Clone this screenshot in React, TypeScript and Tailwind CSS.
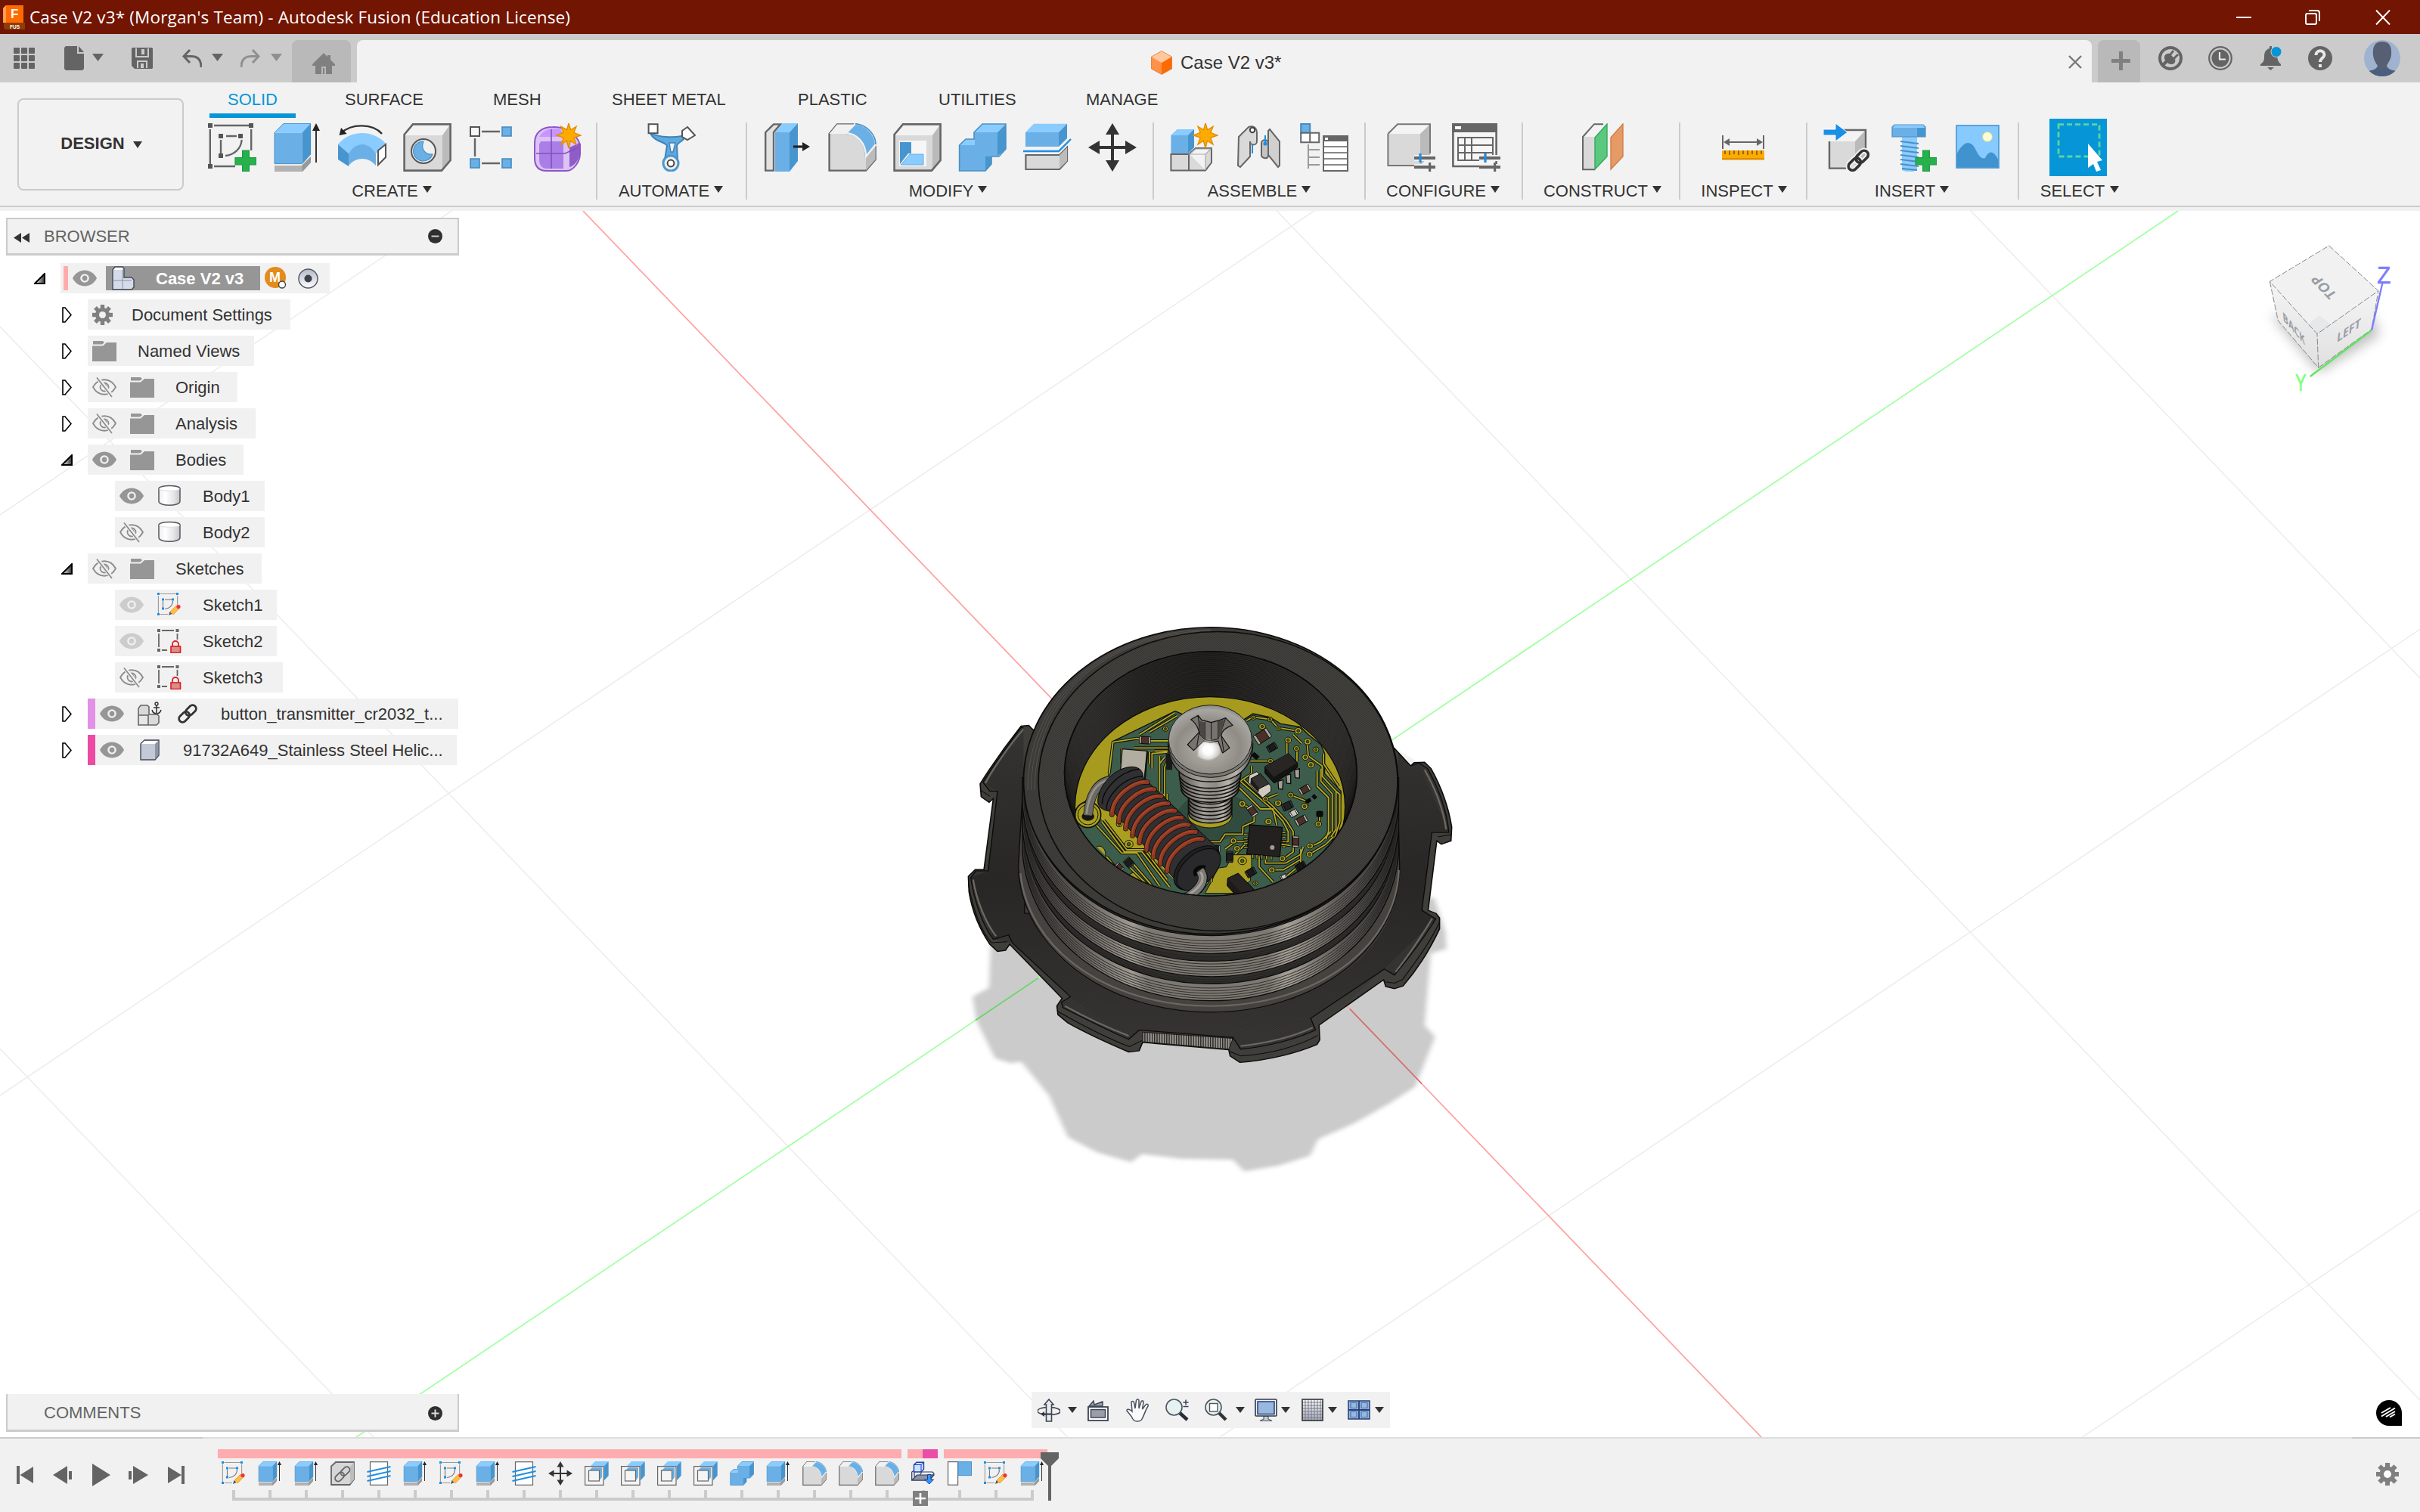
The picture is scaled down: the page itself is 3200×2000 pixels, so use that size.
import React from "react";

type P = { children?: React.ReactNode };

const Ic = ({ children, s = 64 }: P & { s?: number }) => (
  <svg viewBox="0 0 32 32" width={s} height={s} fill="none" className="block shrink-0">
    {children}
  </svg>
);

const Caret = ({ className = "text-[#333]" }: { className?: string }) => (
  <svg width="12" height="9" viewBox="0 0 12 9" className={"block shrink-0 " + className}>
    <path d="M0 0H12L6 9Z" fill="currentColor" />
  </svg>
);

/* ---------- modelling icons, all on a 32 unit grid ---------- */
const Plus = () => <path d="M22.8 18h4.4v4.8H32v4.6h-4.8V32h-4.4v-4.6H18v-4.6h4.8z" fill="#26b14c" stroke="#1f9a40" strokeWidth=".6" />;
const Star = ({ x = 0, y = 0 }: { x?: number; y?: number }) => (
  <path transform={`translate(${x} ${y})`} d="M8 0l1.3 4.4L13 2.2l-1.6 4L16 8l-4.6 1.6L13 14l-3.8-2.4L8 16.5l-1.3-4.9L3 14l1.6-4.4L0 8l4.6-1.8L3 2.2l3.8 2.2z" fill="#ffaa00" stroke="#e08f00" strokeWidth=".7" />
);
const SketchI = () => (
  <>
    <path d="M4 1.5H27M1.4 4V27M28.6 4V18M4 28.5H18M12 8.5H19M8.5 11V20M22.3 11C22 17 17 21 11.5 21.5" stroke="#666" strokeWidth="1.2" />
    <path d="M0 0h3v3H0zM27 0h3v3H27zM0 27h3v3H0zM7 7h3v3H7zM20 7h3v3H20zM7 20h3v3H7z" fill="#555" />
    <Plus />
  </>
);
const SketchPencil = () => (
  <>
    <path d="M3.5 1.5H26M1.4 4V27M26.6 4V16M3.5 28.5H14" stroke="#999" strokeWidth="1.1" />
    <path d="M10 9H19M7.5 11V20M20.5 11C20.5 17 16 21 10 21.5" stroke="#777" strokeWidth="1.1" />
    <path d="M0 0h3v3H0zM25 0h3v3H25zM0 27h3v3H0zM6 7.5h3v3H6zM19 7.5h3v3H19zM6 19.5h3v3H6z" fill="#1b8ee6" />
    <path d="M15 30l1.5-5 3 3z" fill="#555" />
    <path d="M17 25l8-8 4 4-8 8z" fill="#fcbd49" stroke="#e0961f" strokeWidth=".7" />
    <circle cx="28" cy="18.6" r="2.6" fill="#f0303a" />
  </>
);
const SketchLock = () => (
  <>
    <path d="M6 2H22M2 6V24M26.5 6V14M6 28H13" stroke="#666" strokeWidth="1.8" />
    <path d="M0 0h4v4H0zM24.500 0h4v4h-4zM0 26h4v4H0z" fill="#666" />
    <path d="M20 23v-3a4 4 0 018 0v3" stroke="#d22" strokeWidth="1.8" />
    <rect x="18" y="23" width="12.500" height="8.500" fill="#e08a8a" stroke="#d22020" strokeWidth="1.6" />
  </>
);
const Extrude = () => (
  <>
    <path d="M1 28H19L25 22V26L19.500 32H1Z" fill="#b2b2b2" /><path d="M19 28L25 22V26L19.500 32Z" fill="#999" />
    <path d="M1 6.200H19.300V26.800H1Z" fill="#6ab0e6" /><path d="M1 6.200L7 0H25L19.300 6.200Z" fill="#8accff" />
    <path d="M19.300 6.200L25 0V20.500L19.300 26.800Z" fill="#4795cf" />
    <path d="M1 6.200L7 .2H24.800V20.500L19.300 26.800H1Z" stroke="#4a90c4" strokeWidth=".5" />
    <path d="M28.500 3V26" stroke="#333" /><path d="M28.500 0L31 5H26Z" fill="#222" />
  </>
);
const Revolve = () => (
  <>
    <path d="M0 14C8 4 24 4 32 14L25 20C20 13 12 13 7 20Z" fill="#8accff" />
    <path d="M7 20C12 12 20 12 25 20V28C20 22 12 22 7 28Z" fill="#6ab0e6" />
    <path d="M0 14L7 20V28.500L0 24Z" fill="#4795cf" /><path d="M26.500 18L31.500 14V22.500L26.500 27.500Z" fill="#fff" stroke="#555" />
    <path d="M2 6.500C9 0 23 0 29 7" stroke="#333" strokeWidth="1.2" /><path d="M.8 8L2 3l3.800 4z" fill="#222" />
  </>
);
const BoxI = () => (
  <>
    <path d="M.8 8H26V31.300H.8Z" fill="#d9d9d9" /><path d="M.8 8L7 .6H31.300L26 8Z" fill="#f3f3f3" /><path d="M26 8L31.300 .6V24L26 31.300Z" fill="#bababa" />
    <path d="M.8 7.500L6.500 .7H31.300V24.500L25.500 31.300H.8Z" stroke="#666" strokeWidth="1.3" />
  </>
);
const Hole = () => (
  <>
    <BoxI /><circle cx="13.500" cy="18.500" r="8" fill="#efefef" stroke="#555" />
    <path d="M13.500 12a6.500 6.500 0 106 8.500c-5 .5-8-3.500-6-8.500z" fill="#6ab0e6" stroke="#4a90c4" strokeWidth=".6" />
  </>
);
const Pattern = () => (
  <>
    <path d="M9 5.500H21M4.500 10V22M9 26.500H21" stroke="#666" strokeWidth="1.200" />
    <rect x="1.500" y="2.500" width="6" height="6" fill="#f8f8f8" stroke="#555" />
    <path d="M22.500 2.500h6v6h-6zM1.500 23.500h6v6h-6zM22.500 23.500h6v6h-6z" fill="#6ab0e6" stroke="#4389be" strokeWidth=".8" />
  </>
);
const FormI = () => (
  <>
    <path d="M1 13C1 6 6 2.500 13 2.500C22 2 29 8 31 14V20C31 25 27 31.500 22 31.500H9C4 31.500 1 29 1 23Z" fill="#dcc2f5" stroke="#8e55c8" />
    <path d="M5 12H20V30H9C6 30 4 28 4 24V14Z" fill="#a97ee6" /><path d="M4 9C7 4 12 3 18 4L21 9H5Z" fill="#c795ff" />
    <path d="M24 16L30.500 13V21C30 25 27 28 24 29Z" fill="#8f5cc8" /><path d="M2 20H21L30 16M12 4V30" stroke="#8350bd" strokeWidth=".8" />
    <Star x={15.500} y={0} />
  </>
);
const Automate = () => (
  <>
    <path d="M1.500 6C7 10 22 10 26 7C25 12 20 12 19.500 15L20 24H11.500L13 15C12 12 5 13 1.500 6Z" fill="#5ea9e0" stroke="#3f83b8" />
    <path d="M14.500 13H18.500L17 19H15.500Z" fill="#f1f1f1" stroke="#3f83b8" strokeWidth=".7" />
    <rect x=".8" y=".6" width="6" height="6" fill="#fff" stroke="#555" /><path d="M26.500 2.500L31.500 8L26.500 11L23 9V5Z" fill="#fff" stroke="#555" />
    <circle cx="15.500" cy="26.500" r="5" fill="#eee" stroke="#4a98d0" strokeWidth="1.500" /><circle cx="15.500" cy="26.500" r="2.200" stroke="#444" fill="#fff" />
  </>
);
const PressPull = () => (
  <>
    <path d="M1.600 6L7 .7H11.500L7 6V31.300H1.600Z" fill="#e2e2e2" stroke="#666" strokeWidth="1.200" />
    <path d="M8 6H17.500V32H8Z" fill="#6ab0e6" /><path d="M8 6L13 0H23L17.500 6Z" fill="#8accff" /><path d="M17.500 6L23 0V25L17.500 32Z" fill="#4795cf" />
    <path d="M20 15.500H27" stroke="#222" strokeWidth="1.600" /><path d="M26 12.500L31 15.500L26 18.500Z" fill="#222" />
  </>
);
const Fillet = () => (
  <>
    <path d="M.8 7L6 .7H17L12 6.500C20 7 24.500 13 25 22L31.300 16V24L25 31.300H.8Z" fill="#d9d9d9" stroke="#666" strokeWidth="1.200" />
    <path d="M.8 7L6 .7H17L12 7Z" fill="#f1f1f1" /><path d="M25 22L31.300 15V24L25 31.300Z" fill="#bbb" />
    <path d="M12 6.500L18 .3C26 1 31.500 8 31.500 14L25 22C25 13 19 7 12 6.500Z" fill="#6ab0e6" stroke="#f1f1f1" strokeWidth="1.200" />
    <path d="M18 .3C26 1 31.500 8 31.500 14" stroke="#4a90c4" strokeWidth=".8" />
  </>
);
const Shell = () => (
  <>
    <BoxI /><path d="M4 11.500H22V28.500H4Z" fill="#f6f6f6" /><path d="M4.500 12.500H12V20H10L4.500 27Z" fill="#4795cf" />
    <path d="M5 27.500L11 20.500H20V27.500Z" fill="#8accff" stroke="#6aaedd" strokeWidth=".5" />
  </>
);
const Combine = () => (
  <>
    <path d="M.8 14.500H10.500V6H26V22H18V31.500H.8Z" fill="#6ab0e6" /><path d="M.8 14.500L5 10.500H11V14.500ZM10.500 6L16 .5H31.500L26 6Z" fill="#8accff" />
    <path d="M26 6L31.500 .5V17L26 22H22V27L18 31.500V22H26Z" fill="#4795cf" />
    <path d="M.8 14.500L5 10.500H10.500V6L16 .5H31.500V17L27 22H22V27L18 31.500H.8Z" stroke="#4a90c4" strokeWidth=".8" />
  </>
);
const Split = () => (
  <>
    <path d="M1.500 6H23.500V15.500H1.500Z" fill="#6ab0e6" /><path d="M1.500 6L7 .4H29L23.500 6Z" fill="#8accff" /><path d="M23.500 6L29 .4V10L23.500 15.500Z" fill="#4795cf" />
    <path d="M0 18.500H23.500L31.500 10.500" stroke="#1b8ee6" strokeWidth="1.200" />
    <path d="M1.700 21H24L29 16V25L24 30.500H1.700Z" fill="#d9d9d9" stroke="#666" strokeWidth="1.100" /><path d="M24 21L29 16V25L24 30Z" fill="#bbb" />
  </>
);
const Move = () => (
  <path d="M16 0L20.500 7.500H17V15H24.500V11.500L32 16L24.500 20.500V17H17V24.500H20.500L16 32L11.500 24.500H15V17H7.500V20.500L0 16L7.500 11.500V15H15V7.500H11.500Z" fill="#333" />
);
const NewComp = () => (
  <>
    <path d="M.7 8L5 4H16V16L12 20H.7Z" fill="#6ab0e6" /><path d="M.7 8L5 4H16L12 8Z" fill="#8accff" /><path d="M12 8L16 4V16L12 20Z" fill="#4795cf" />
    <path d="M.7 20.500H12.500V31.300H.7ZM12.500 20.500L17 16.500H27.500V26L23.500 31.300H12.500Z" fill="#d9d9d9" stroke="#666" />
    <path d="M13 20.500H23.500V31M13 20.500L17 17H27L23.500 20.500Z" fill="#f3f3f3" stroke="#aaa" strokeWidth=".6" /><Star x={15.500} y={0} />
  </>
);
const Joint = () => (
  <>
    <path d="M2.500 9L9 2.500C13 1 14.500 4 14.500 6V12C14.500 15 10 15 10 12V22L3.500 29L2 28Z" fill="#d9d9d9" stroke="#666" />
    <circle cx="11.500" cy="4.500" r="1.600" stroke="#444" fill="#fff" />
    <path d="M22 5L23 4L29.500 12V28L28.500 29L22 21Z" fill="#d0d0d0" stroke="#666" /><path d="M17.500 13C17.500 10.500 22 10.500 22 13V22C21 24 17.500 23 17.500 21Z" fill="#c4c4c4" stroke="#666" />
    <path d="M11.500 14.500V20M20 8V14" stroke="#1b8ee6" /><circle cx="20" cy="13.500" r="1.300" fill="#1b8ee6" />
  </>
);
const Bom = () => (
  <>
    <rect x=".6" y=".4" width="6" height="6" fill="#6ab0e6" stroke="#4389be" /><path d="M.6 6.400h6v6.200h-6zM6.600 6.400h6v6.200h-6z" fill="#fff" stroke="#666" />
    <path d="M5.500 14V30M5.500 17.500H13M5.500 22.500H13M5.500 27.500H13" stroke="#999" /><path d="M15.500 8.500H31.500V31.500H15.500Z" fill="#fff" stroke="#666" />
    <path d="M15 8H32V12H15Z" fill="#666" /><path d="M16 15.500H31M16 19.500H31M16 23.500H31M16 27.500H31" stroke="#888" strokeWidth=".9" /><path d="M16.500 9.500h2v1.500h-2z" fill="#fff" />
  </>
);
const Sliders = () => (
  <>
    <path d="M18 23H32M18 29H32" stroke="#f1f1f1" strokeWidth="4" /><path d="M18 23H32M18 29H32" stroke="#666" strokeWidth="2" />
    <path d="M22 20V26" stroke="#1b8ee6" strokeWidth="1.600" /><path d="M28.300 26V32" stroke="#666" strokeWidth="1.600" />
  </>
);
const Config1 = () => (
  <>
    <path d="M.7 7H22V28H.7Z" fill="#d9d9d9" /><path d="M.7 7L7 .6H28.500L22 7Z" fill="#f4f4f4" /><path d="M22 7L28.500 .6V21L22 28Z" fill="#bababa" />
    <path d="M.7 7L7 .6H28.500V20M.7 7V28H18" stroke="#777" /><Sliders />
  </>
);
const Config2 = () => (
  <>
    <path d="M.7 .7H29.300V28.500H.7Z" fill="#f6f6f6" stroke="#666" strokeWidth="1.300" /><path d="M0 0H30V6H0Z" fill="#666" /><path d="M2 2h4v2H2z" fill="#fff" />
    <path d="M4 9.500H27V24.500H4ZM4 14.500H27M4 19.500H27M8.500 9.500V24.500M13 9.500V24.500" stroke="#666" /><Sliders />
  </>
);
const Construct = () => (
  <>
    <path d="M4 9H12V30.500H4Z" fill="#d9d9d9" /><path d="M4 9L12 .6H18L12 9Z" fill="#f3f3f3" />
    <path d="M12 30.600H4V9L11.500 .6H17.500" stroke="#666" /><path d="M12 9.500L20 .5V22L12 30.500Z" fill="#5bc880" stroke="#35a85c" strokeWidth=".7" />
    <path d="M22.500 9.500L30.500 .5V22L22.500 30.500Z" fill="#e69a66" stroke="#cf7f48" strokeWidth=".7" />
  </>
);
const Inspect = () => (
  <>
    <path d="M2.500 8V17M29.500 8V17M5 12.500H27" stroke="#666" /><path d="M3 12.500l4-2.500v5zM29 12.500l-4-2.500v5z" fill="#666" />
    <path d="M2 18H30V24H2Z" fill="#ffaa00" /><path d="M2 23H30V24.200H2Z" fill="#e08f00" />
    <path d="M4 18v2.500M7 18v3M10 18v2.500M13 18v3M16 18v2.500M19 18v3M22 18v2.500M25 18v3M28 18v2.500" stroke="#7a5a10" strokeWidth=".8" />
  </>
);
const Chain = ({ c = "#333", w = 2.4 }: { c?: string; w?: number }) => (
  <g stroke={c} strokeWidth={w} strokeLinecap="round" transform="rotate(-45 16 16)">
    <rect x="1" y="11" width="17" height="10" rx="5" /><rect x="14" y="11" width="17" height="10" rx="5" />
  </g>
);
const InsertI = () => (
  <>
    <path d="M4 12H21V30H4Z" fill="#d9d9d9" /><path d="M4 12L11 4.500H28L21 12Z" fill="#f3f3f3" /><path d="M21 12L28 4.500V22L21 30Z" fill="#bababa" />
    <path d="M13 4.500H28V18M4 12V29.800H15" stroke="#666" strokeWidth="1.200" />
    <path d="M0 4H8V0L16 6L8 12V8H0Z" fill="#1b8ee6" stroke="#fff" strokeWidth=".5" />
    <g transform="translate(14.500 16) scale(.54)"><Chain c="#f1f1f1" w={7} /><Chain c="#333" w={3.400} /></g>
  </>
);
const Bolt = () => (
  <>
    <path d="M9 8H19V31C16 32.500 12 32.500 9 31Z" fill="#8accff" /><path d="M8 12l12 1.500M8 15l12 1.500M8 18l12 1.500M8 21l12 1.500M8 24l12 1.500M8 27l12 1.500M9 30l10 1" stroke="#4a8fc4" strokeWidth=".9" />
    <path d="M2.500 2.500L4 1H23L24.500 2.500V9H2.500Z" fill="#6ab0e6" stroke="#4a90c4" strokeWidth=".6" /><path d="M3 3H24L23 1.300H4Z" fill="#8accff" /><path d="M19 3h5.500v6H19z" fill="#4795cf" /><Plus />
  </>
);
const Picture = () => (
  <>
    <rect x="2" y="1.500" width="28" height="28" fill="#86caff" stroke="#4795cf" strokeWidth=".8" /><circle cx="22.500" cy="9" r="3.200" fill="#ffffd6" stroke="#d8d890" strokeWidth=".5" />
    <path d="M2.400 20C7 11 12 11 15 18C17 22 19 24 21 23C24 17 27 19 29.600 24V29.200H2.400Z" fill="#4093cf" />
  </>
);
const Thread = () => (
  <>
    <rect x="4.500" y=".7" width="23" height="30.600" fill="#fff" stroke="#666" strokeWidth="1.200" />
    <path d="M.5 14L31.500 7M.5 20L31.500 13M.5 26L31.500 19" stroke="#1b8ee6" strokeWidth="2" />
  </>
);
const LinkBox = () => (
  <>
    <path d="M1 6.500L7 1H31V24L25.500 31H1Z" fill="#d6d6d6" stroke="#666" strokeWidth="1.800" /><path d="M26 7L31 1.500V24L26 30Z" fill="#bdbdbd" />
    <g transform="translate(3 4) scale(.8)"><Chain c="#666" w={2.300} /></g>
  </>
);
const Offset = () => (
  <>
    <path d="M8.500 6L14 .2H31.500V19L26 25V6Z" fill="#6ab0e6" /><path d="M26 6L31.500 .2V19L26 25Z" fill="#4795cf" /><path d="M8 6L14 .2H31.500L26 6Z" fill="#8accff" />
    <path d="M.6 6.600H25V31.300H.6Z" fill="#f4f4f4" stroke="#666" strokeWidth="1.200" /><path d="M6 12L10 8H23V21L19 26H6Z" fill="#6ab0e6" />
    <rect x="5.500" y="12" width="14" height="14" fill="#f4f4f4" stroke="#666" strokeWidth="1.200" />
  </>
);
const Import = () => (
  <>
    <path d="M.7 25V14L4 12V20H10L14 14H28L30 16L24 25Z" fill="#eceef4" stroke="#2f3a58" strokeWidth="1.200" />
    <path d="M.7 25L7.500 18H30L24 25Z" fill="#8c93a4" stroke="#2f3a58" strokeWidth="1.200" />
    <path d="M3.500 4.500L7 1.200H16.500V10.500L13 14H3.500Z" fill="#cfe0ff" stroke="#1a3fb0" strokeWidth="1.400" />
    <path d="M3.500 4.500H13V14M13 4.500L16.500 1.200" stroke="#1a3fb0" />
    <path d="M21.500 17.500h4.500v6.500h3.500L23.700 30l-6-6h3.800z" fill="#3294ff" stroke="#123f8f" />
  </>
);
const Flag = () => (
  <><rect x=".6" y=".6" width="13" height="30.600" fill="#fff" stroke="#666" strokeWidth="1.200" /><rect x="14" y=".6" width="17.500" height="18" fill="#6ab0e6" stroke="#4a90c4" /></>
);

/* ---------- browser tree icons ---------- */
const Eye = ({ faded = false }: { faded?: boolean }) => (
  <svg width="32" height="26" viewBox="0 0 32 26" className="block shrink-0" opacity={faded ? 0.4 : 1}>
    <path d="M0 13C7-1 25-1 32 13C25 27 7 27 0 13Z" fill="#969696" /><circle cx="16" cy="13" r="4.600" fill="#969696" stroke="#f1f1f1" strokeWidth="2.400" />
  </svg>
);
const EyeOff = () => (
  <svg width="32" height="28" viewBox="0 0 32 28" fill="none" stroke="#8c8c8c" strokeWidth="1.800" className="block shrink-0">
    <path d="M1 14C8 1 24 1 31 14C24 27 8 27 1 14ZM16 8.500a5.500 5.500 0 105.500 5.500M12 12c3-3 7-1 7 3M16 8.500c3 0 6 3 5.500 6" />
    <path d="M7 2L27 27" stroke="#f1f1f1" strokeWidth="5" /><path d="M6 1.500L26 27" />
  </svg>
);
const Folder = () => (
  <svg width="32" height="27" viewBox="0 0 32 27" className="block shrink-0"><path d="M1 0H14L16 2.200L13 4.500H1ZM0 6.500H14L19 2H32V27H0Z" fill="#969696" /></svg>
);
const GearI = ({ s, c, hole }: { s: number; c: string; hole: string }) => (
  <svg width={s} height={s} viewBox="-15 -15 30 30" className="block shrink-0">
    <g fill={c}>
      <circle r="10.500" />
      {[0, 45, 90, 135].map((a) => <rect key={a} x="-3" y="-15" width="6" height="30" transform={`rotate(${a})`} />)}
    </g>
    <circle r="5" fill={hole} />
  </svg>
);
const Cyl = () => (
  <svg width="32" height="30" viewBox="0 0 32 30" className="block shrink-0">
    <defs><linearGradient id="cyl"><stop offset="0" stopColor="#eee" /><stop offset=".3" stopColor="#fff" /><stop offset=".7" stopColor="#e6e6e8" /><stop offset="1" stopColor="#c4c4c8" /></linearGradient></defs>
    <path d="M2 5V22C2 29 30 29 30 22V5" fill="url(#cyl)" stroke="#555860" strokeWidth="1.500" /><path d="M2 5C2 0 30 0 30 5C30 9.500 2 9.500 2 5Z" fill="#fff" /><path d="M2 5.500C2 .2 30 .2 30 5.500" fill="none" stroke="#555860" strokeWidth="1.500" /><path d="M2.500 6C5 9 27 9 29.500 6" fill="none" stroke="#ddd" />
  </svg>
);
const Comp = () => (
  <svg width="30" height="32" viewBox="0 0 30 32" className="block shrink-0">
    <path d="M1 5L4 1H14L16 3V15H26L29 18V28L26 31H1Z" fill="#d5dbe8" stroke="#434855" strokeWidth="1.400" /><path d="M14 5V30M1 19H14M14 19H26" stroke="#8890a4" /><path d="M2 5L4.500 2H14L13 5Z" fill="#fff" />
  </svg>
);
const CompAnchor = () => (
  <Ic s={32}>
    <path d="M1 9L4 5H13L15 7V17M1 9V31H25L28 28V19L26 17H15M14 17V31M1 18H14" stroke="#666" strokeWidth="1.600" fill="#d9d9d9" /><rect x="2" y="19" width="11" height="11" fill="#e6e6e6" />
    <circle cx="25" cy="3" r="2" stroke="#333" strokeWidth="1.400" /><path d="M25 5V15M21 8H29M19 11C20 15 23 16 25 16C28 16 30 14 31 11" stroke="#333" strokeWidth="1.600" />
  </Ic>
);
const BoxSmall = () => (
  <svg width="26" height="28" viewBox="0 0 26 28" className="block shrink-0"><path d="M1 6L6 1H25V21L20 27H1Z" fill="#c3c9d6" stroke="#434855" strokeWidth="1.400" /><path d="M2 6L6 2H24L20 6Z" fill="#fff" /><path d="M20 6L24.300 2V21L20 26Z" fill="#8e95a6" /></svg>
);
const Tri = ({ open }: { open: boolean }) =>
  open ? (
    <svg width="15" height="15" viewBox="0 0 15 15" className="block"><defs><linearGradient id="tri"><stop offset="0" stopColor="#fff" /><stop offset="1" stopColor="#333" /></linearGradient></defs><path d="M1 14L14 1V14Z" fill="url(#tri)" stroke="#000" strokeWidth="2" /></svg>
  ) : (
    <svg width="13" height="21" viewBox="0 0 13 21" className="ml-px block"><path d="M1 1L4 1L12 10.500L4 20H1Z" fill="#fff" stroke="#000" strokeWidth="1.600" /></svg>
  );

/* ---------- 3D canvas ---------- */
const arcs = [1283, 1228, 1205, 1155, 1130, 1072];
const ringIdx = [0, 1, 2, 3, 4, 5, 6, 7, 8];

const traces = [
  "M440 240H350L310 230L215 245L200 370", "M460 128L320 215M470 140L360 205", "M440 268H300M440 280H380M400 300V430M420 305L400 330V440M435 310L420 345V460M430 285L370 290V350",
  "M745 160L770 145L840 155L870 188L945 200", "M905 235V290M985 245L990 300L1045 340V380L1100 440V590L1080 620", "M1040 350V400L1085 450V600M1025 360V420L1070 465V600L1060 630",
  "M1100 440L1115 452V560L1090 640", "M945 275V320M1050 290V330L1110 420", "M720 400L840 505L890 560L910 600V640H880", "M735 395L850 500L905 560L930 600V680L890 710", "M710 420L800 510H850L865 575",
  "M730 490L775 520V560L730 580V610H660L640 640H585", "M740 640H700L660 670M740 650L700 690", "M795 700V740L850 800M820 700V725H900L960 690L970 660M845 752H890L960 710", "M1000 660L1040 640L1080 600M995 690L1060 650L1090 620M880 650L920 655",
  "M170 560L260 680H330L440 820M180 555L270 672H340L430 790M150 575L250 685H310L400 815M190 700L240 760M280 710L370 815M270 730L350 810", "M760 320H840M765 340V370L720 400M870 450L820 470M920 455L985 480V500", "M590 740V800L560 840M605 730V800", "M960 670V730L900 780M1035 530V570M930 215L965 250",
  "M430 450V500M415 450V480M250 270V330M360 285V330",
];
const pads = [[423, 192, 11], [807, 183, 13], [772, 148, 10], [838, 155, 10], [872, 190, 10], [950, 200, 14], [910, 237, 13], [987, 243, 14], [943, 270, 12], [1020, 275, 12], [978, 305, 13], [1000, 335, 14], [728, 490, 14], [832, 560, 14], [870, 487, 14], [920, 455, 12], [975, 500, 13], [693, 637, 13], [707, 667, 13], [887, 707, 13], [845, 752, 13], [997, 657, 13], [995, 690, 13], [1030, 570, 13], [1035, 530, 12], [780, 805, 10], [820, 470, 12], [840, 320, 11], [728, 716, 17], [278, 650, 17], [240, 570, 12]];

type Part = { x: number; y: number; w: number; h: number; a: number; c: string; e: string };
const parts: Part[] = [
  { x: 342, y: 237, w: 44, h: 28, a: 3, c: "#4b3027", e: "#b6aea4" }, { x: 808, y: 222, w: 62, h: 40, a: -33, c: "#4b3027", e: "#a8a096" },
  { x: 846, y: 266, w: 38, h: 26, a: -30, c: "#1b1b1b", e: "#333" }, { x: 976, y: 433, w: 44, h: 26, a: -30, c: "#4b3027", e: "#b6aea4" },
  { x: 907, y: 498, w: 42, h: 28, a: -25, c: "#222", e: "#333" }, { x: 932, y: 527, w: 32, h: 24, a: -30, c: "#c9c5ba", e: "#eee" },
  { x: 962, y: 556, w: 46, h: 28, a: -28, c: "#4b3027", e: "#b6aea4" }, { x: 768, y: 518, w: 44, h: 26, a: 55, c: "#4b3027", e: "#b6aea4" },
  { x: 940, y: 640, w: 44, h: 24, a: 92, c: "#4b3027", e: "#b6aea4" }, { x: 678, y: 700, w: 44, h: 26, a: 92, c: "#1d1d1d", e: "#333" },
  { x: 627, y: 668, w: 26, h: 26, a: 0, c: "#1d1d1d", e: "#ddd" }, { x: 278, y: 723, w: 34, h: 30, a: 50, c: "#1b1b1b", e: "#333" },
  { x: 240, y: 742, w: 34, h: 22, a: 45, c: "#4b3027", e: "#999" }, { x: 762, y: 762, w: 40, h: 28, a: -30, c: "#1b1b1b", e: "#333" },
  { x: 960, y: 738, w: 40, h: 26, a: -30, c: "#161616", e: "#222" }, { x: 893, y: 780, w: 26, h: 18, a: -25, c: "#cfcbc2", e: "#eee" },
  { x: 780, y: 300, w: 26, h: 16, a: 40, c: "#0c0c0c", e: "#111" }, { x: 990, y: 478, w: 20, h: 12, a: -30, c: "#0c0c0c", e: "#111" }, { x: 1014, y: 462, w: 16, h: 12, a: 40, c: "#0c0c0c", e: "#111" }, { x: 1035, y: 530, w: 24, h: 20, a: 0, c: "#0c0c0c", e: "#111" },
];

const Board = () => (
  <g strokeLinejoin="round">
    <path d="M462 122L215 242L195 400L60 520L60 580L170 700L330 830L460 880H900L1000 760L1110 610L1120 440L1055 370V290L1040 255L990 215L960 185L880 172L840 147L770 132L735 155L600 180Z" fill="#3d5d4c" stroke="#0f120e" strokeWidth="4" />
    <path d="M195 400L440 560L560 820L470 800L330 672H265L165 545L100 490Z" fill="#aa9e20" />
    <path d="M765 692H690L665 740L630 745L605 800L580 845H700L760 795L765 740Z" fill="#aa9e20" stroke="#111" strokeWidth="3" />
    <path d="M150 660C170 650 190 670 185 700L240 750M300 760L370 830H350L280 770Z" fill="#aa9e20" stroke="#111" strokeWidth="3" />
    <ellipse cx="620" cy="540" rx="150" ry="95" fill="#20352a" opacity=".4" />
    {traces.map((d) => <path key={d} d={d} fill="none" stroke="#10130c" strokeWidth="12" />)}
    {traces.map((d) => <path key={d} d={d} fill="none" stroke="#b5a823" strokeWidth="5.500" />)}
    {pads.map(([x, y, r]) => (
      <g key={`${x}-${y}`}><ellipse cx={x} cy={y} rx={r} ry={r * 0.9} fill="#b0a31f" stroke="#10130c" strokeWidth="3" /><circle cx={x} cy={y} r={r * 0.4} fill="#4b5a2c" stroke="#10130c" strokeWidth="2.500" /></g>
    ))}
    {parts.map((p) => (
      <g key={`${p.x}-${p.y}`} transform={`translate(${p.x} ${p.y}) rotate(${p.a})`} stroke="#0a0a0a" strokeWidth="2.500">
        <rect x={-p.w / 2} y={-p.h / 2} width={p.w} height={p.h} fill={p.e} /><rect x={-p.w * 0.32} y={-p.h / 2} width={p.w * 0.64} height={p.h} fill={p.c} />
      </g>
    ))}
    <path d="M252 272L350 280L340 390L244 370Z" fill="#b1ada0" stroke="#111" strokeWidth="4" /><path d="M350 280L355 283L345 390H338Z" fill="#111" />
    <path d="M425 290H450V355H425Z" fill="#191919" />
    <path d="M758 573L887 583L877 700L746 688Z" fill="#232120" stroke="#0a0a0a" strokeWidth="4" /><circle cx="847" cy="663" r="9" fill="#a49c94" />
    <path d="M770 692v16M786 693v16M806 694v16M824 696v16M843 698v16M733 610h18M733 628h18M733 646h18M733 664h18M885 604h16M885 622h16M885 640h16M885 660h16" stroke="#0a0a0a" strokeWidth="9" />
    <path d="M770 692v14M786 693v14M806 694v14M824 696v14M843 698v14M735 610h14M735 628h14M735 646h14M735 664h14M887 604h12M887 622h12M887 640h12M887 660h12" stroke="#b5a823" strokeWidth="4" />
    <path d="M870 400L890 395L888 432L872 430ZM902 376L920 372V410L904 408ZM935 356L955 350V388L938 386Z" fill="#a49f97" stroke="#0a0a0a" strokeWidth="4" />
    <path d="M818 342L912 290L947 328V345L855 408L818 368Z" fill="#151413" stroke="#050505" strokeWidth="3" /><path d="M818 342L912 290L944 328L852 384Z" fill="#282625" />
    <path d="M756 376L786 362L842 420V440L808 466L752 405Z" fill="#cfcac0" stroke="#0a0a0a" strokeWidth="3" /><path d="M762 390L800 370L834 410L795 430Z" fill="#35332f" stroke="#0a0a0a" strokeWidth="3" /><path d="M762 390L795 430L792 445L760 410Z" fill="#1c1b1a" />
    <path d="M670 785L712 765L775 830L770 850H700L668 815Z" fill="#1c1b1a" stroke="#050505" strokeWidth="3" /><path d="M672 785L712 767L772 830L730 850Z" fill="#262423" />
    {/* inductor */}
    <circle cx="116" cy="533" r="51" fill="#aa9e20" stroke="#10130c" strokeWidth="5" /><circle cx="116" cy="533" r="40" fill="none" stroke="#10130c" strokeWidth="3" /><ellipse cx="116" cy="540" rx="25" ry="17" fill="#161513" />
    <path d="M205 397C150 405 122 460 116 535" fill="none" stroke="#111" strokeWidth="38" /><path d="M205 397C150 405 122 460 116 535" fill="none" stroke="#6b6964" strokeWidth="33" /><path d="M200 394C145 405 118 460 110 530" fill="none" stroke="#96938c" strokeWidth="8" />
    <path d="M155 480C155 420 220 345 290 343C320 343 335 360 335 385L632 668C640 730 590 800 500 830C470 830 460 810 462 790L215 520C180 520 155 505 155 480Z" fill="#303032" stroke="#080808" strokeWidth="3" />
    <path d="M172 492C170 440 235 362 318 352M190 512C185 465 250 385 335 380M205 520C205 480 265 405 345 395" fill="none" stroke="#080808" strokeWidth="4" />
    {ringIdx.map((k) => (
      <g key={k} transform={`translate(${k * 27.300} ${k * 28.200})`} fill="none" strokeLinecap="round">
        <path d="M352 404C300 395 212 460 211 532" stroke="#0d0908" strokeWidth="20" /><path d="M352 404C300 395 212 460 211 532" stroke="#8f3821" strokeWidth="16" />
        <path d="M340 401C296 400 216 455 209 520" stroke="#a5452b" strokeWidth="6" />
      </g>
    ))}
    <ellipse cx="548" cy="744" rx="108" ry="66" transform="rotate(-42 548 744)" fill="#202022" stroke="#080808" strokeWidth="3" /><ellipse cx="555" cy="750" rx="104" ry="60" transform="rotate(-42 555 750)" fill="#29292b" stroke="#080808" strokeWidth="3" />
    <path d="M545 775C530 750 560 735 582 742" fill="none" stroke="#080808" strokeWidth="14" /><path d="M560 752C590 790 560 835 500 865" fill="none" stroke="#111" strokeWidth="38" /><path d="M560 754C588 790 560 833 500 865" fill="none" stroke="#7c7974" strokeWidth="32" /><path d="M562 760C585 790 560 828 500 858" fill="none" stroke="#a5a29b" strokeWidth="9" />
    {/* screw */}
    <ellipse cx="600" cy="535" rx="88" ry="50" fill="#aa9e20" stroke="#111" strokeWidth="3" />
    {[530, 515, 500, 485, 470, 455].map((y) => <path key={y} d={`M515 ${y - 30}V${y}C530 ${y + 48} 670 ${y + 48} 686 ${y}V${y - 30}Z`} fill="url(#steel)" stroke="#0f0f0e" strokeWidth="5" />)}
    {[436, 422, 408, 394, 380].map((y, i) => <path key={y} d={`M${486 - i * 2} ${y - 30}V${y}C510 ${y + 64} 690 ${y + 64} ${714 + i * 2} ${y}V${y - 30}Z`} fill="url(#steel)" stroke="#0f0f0e" strokeWidth="5" />)}
    <path d="M434 250C434 350 500 402 602 402C704 402 770 350 770 250Z" fill="url(#steel)" stroke="#0f0f0e" strokeWidth="4" /><ellipse cx="602" cy="250" rx="167" ry="135" fill="#7a7873" stroke="#0f0f0e" strokeWidth="3" />
    <ellipse cx="601" cy="235" rx="165" ry="137" fill="url(#head)" stroke="#1a1a19" strokeWidth="3" />
    <path d="M560 250C580 245 600 240 610 248C625 250 640 250 640 290C620 320 570 320 550 300Z" fill="#fff" opacity=".35" />
    <path d="M524 155L553 139L567 157L605 167L640 157L662 149L690 178C665 185 645 200 645 220L678 268L650 288L632 240L600 248L575 240L535 278L511 255L557 205C550 180 540 165 524 155Z" fill="#77746f" stroke="#111" strokeWidth="3.500" />
    <path d="M553 139L560 215L580 235L600 240L632 232L650 185L662 149M580 165V232M605 167V238M632 160V230M557 205L548 262M645 220L655 284" fill="none" stroke="#111" strokeWidth="3" /><path d="M556 160L580 168V232L560 213ZM632 162L655 156L645 215L632 230Z" fill="#4a4844" />
    <circle cx="592" cy="276" r="46" fill="url(#spot)" />
  </g>
);

const Scene = () => (
  <svg className="absolute inset-0 block" width="3200" height="1622" viewBox="0 279 3200 1622" fill="none">
    <defs>
      <pattern id="hatch" width="5" height="5" patternUnits="userSpaceOnUse" patternTransform="rotate(38)"><rect width="5" height="5" fill="#383633" /><rect width="5" height="2" fill="#484643" /></pattern>
      <pattern id="hatch2" width="5" height="5" patternUnits="userSpaceOnUse" patternTransform="rotate(38)"><rect width="5" height="5" fill="#302e2c" /><rect width="5" height="2" fill="#3d3b38" /></pattern>
      <pattern id="ribs" width="7" height="40" patternUnits="userSpaceOnUse"><rect width="7" height="40" fill="#97938c" /><rect width="3" height="40" fill="#2b2a28" /></pattern>
      <linearGradient id="light" gradientUnits="userSpaceOnUse" x1="245" y1="0" x2="1330" y2="0"><stop offset="0" stopColor="#3b3937" /><stop offset=".14" stopColor="#5a5753" /><stop offset=".29" stopColor="#a09a92" /><stop offset=".33" stopColor="#7d7972" /><stop offset=".65" stopColor="#7d7972" /><stop offset=".7" stopColor="#a6a097" /><stop offset=".84" stopColor="#5e5b57" /><stop offset="1" stopColor="#2f2e2c" /></linearGradient>
      <linearGradient id="well" x1="0" y1="0" x2="1" y2="0"><stop offset="0" stopColor="#3d3b38" /><stop offset=".25" stopColor="#2a2826" /><stop offset=".5" stopColor="#232120" /><stop offset=".75" stopColor="#2f2d2b" /><stop offset="1" stopColor="#3c3a37" /></linearGradient>
      <linearGradient id="steel"><stop offset="0" stopColor="#57544f" /><stop offset=".35" stopColor="#a29e97" /><stop offset=".6" stopColor="#8f8b84" /><stop offset=".8" stopColor="#b8b4ac" /><stop offset="1" stopColor="#55524e" /></linearGradient>
      <radialGradient id="head" cx=".48" cy=".62" r=".65"><stop offset="0" stopColor="#d0cec9" /><stop offset=".25" stopColor="#a7a49d" /><stop offset=".6" stopColor="#8f8c86" /><stop offset=".85" stopColor="#a8a6a1" /><stop offset="1" stopColor="#7c7a76" /></radialGradient>
      <radialGradient id="spot"><stop offset="0" stopColor="#fff" /><stop offset=".35" stopColor="#fff" /><stop offset="1" stopColor="#fff" stopOpacity="0" /></radialGradient>
      <linearGradient id="deck" gradientUnits="userSpaceOnUse" x1="0" y1="400" x2="0" y2="1400"><stop offset="0" stopColor="#000" stopOpacity="0" /><stop offset=".5" stopColor="#000" stopOpacity=".25" /><stop offset="1" stopColor="#000" stopOpacity="0" /></linearGradient>
      <filter id="soft" x="-10%" y="-10%" width="120%" height="120%"><feGaussianBlur stdDeviation="7" /></filter>
      <clipPath id="mouth"><ellipse cx="786" cy="547" rx="421" ry="396" /></clipPath>
      <clipPath id="pcb"><ellipse cx="784" cy="655" rx="389" ry="357" /></clipPath>
      <clipPath id="deckclip"><path d="M0 300H247V900C260 1140 500 1320 786 1320C1070 1320 1310 1140 1325 900V400H1568V1568H0Z" /></clipPath>
    </defs>
    <g stroke="#ededed" strokeWidth="1.600">
      {[432, 1387, -1478, -2433].map((c) => <path key={c} d={`M0 ${c}L3200 ${c + 3330}`} />)}
      {[681, 1449, 2987, 3755].map((c) => <path key={c} d={`M0 ${c}L3200 ${c - 2154.600}`} />)}
    </g>
    <g transform="translate(1240 800) scale(.4592 .4082)">
      <path d="M155 1000L148 1240L100 1270L112 1350L165 1470L210 1485L240 1480L320 1590L375 1725L460 1775L557 1806L588 1780L700 1795L850 1798L882 1836L980 1818L1072 1785L1095 1732L1200 1680L1300 1616L1375 1562L1432 1400L1402 1362L1420 1130L1465 1115L1462 1060L1430 950L900 900Z" fill="#cbcbcb" filter="url(#soft)" />
    </g>
    <path d="M771 279L2329 1901" stroke="#ffa0a0" strokeWidth="1.700" /><path d="M2880 279L471 1901" stroke="#a0ffa0" strokeWidth="1.700" />
    <path d="M1785 1334.600L1880 1433.500" stroke="#cc7070" strokeWidth="1.700" /><path d="M1373 1293.600L1290 1349.500" stroke="#70cc70" strokeWidth="1.700" />

    <g transform="translate(1240 800) scale(.4592 .4082)">
      <path d="M270 400L262 391L240 393C200 450 150 530 122 580L125 622L148 640L160 628L133 858L108 858L88 880L90 930C100 1000 120 1050 150 1100L172 1123L195 1120L207 1100L358 1275L343 1300L346 1328L375 1355C430 1390 500 1425 550 1449L580 1445L590 1418L838 1442L842 1462L870 1483C960 1475 1040 1450 1092 1425L1100 1410L1098 1362L1284 1215L1290 1237L1315 1244L1340 1235C1390 1170 1420 1110 1445 1050V1015L1435 1000L1412 990L1437 765L1450 776L1478 765L1480 720C1470 650 1445 580 1420 530L1402 510L1372 511L1362 522L1315 465L1280 440V900H300V430Z" fill="#403e3b" stroke="#0c0c0b" strokeWidth="3.500" />
      <path d="M590 1385L850 1405L838 1440L590 1416Z" fill="url(#ribs)" stroke="#111" strokeWidth="2" />
      <path d="M88 905C100 980 125 1060 155 1095L200 1092M122 600L150 620M346 1318C420 1365 500 1410 552 1432L588 1412M842 1448L872 1462C960 1455 1040 1430 1095 1395M1290 1222L1315 1226L1338 1215C1380 1150 1420 1090 1444 1030M1440 752L1478 745" stroke="#0c0c0b" strokeWidth="2.500" />
      <g clipPath="url(#deckclip)">
        <path d="M262 402L240 397C205 450 155 530 130 575L150 604L172 604L145 862L110 862L95 885C105 960 130 1040 160 1084L204 1070L215 1096L382 1270L356 1288L360 1305C430 1345 500 1385 550 1408L580 1378L850 1402L872 1440C950 1432 1030 1408 1088 1378L1074 1340L1286 1180L1315 1200C1360 1140 1400 1080 1434 1018L1394 990L1423 738L1472 738C1465 660 1440 590 1410 530L1385 512L1362 522L1300 450V1000H250Z" fill="url(#hatch2)" stroke="#0c0c0b" strokeWidth="3" />
        <path d="M262 402L130 575L172 604L145 862L95 885L160 1084L215 1096L382 1270L550 1408L850 1402L1088 1378L1286 1180L1434 1018L1394 990L1423 738L1472 738L1385 512L1300 450V1000H250Z" fill="url(#deck)" />
        <path d="M137 578C165 520 210 450 248 402M102 890C112 960 138 1030 168 1074M366 1300C430 1340 500 1375 550 1397M872 1430C950 1420 1030 1398 1080 1370M1318 1190C1360 1130 1395 1070 1424 1016M1464 728C1455 660 1430 590 1402 535" stroke="#6c6963" strokeWidth="5" />
      </g>
      {/* threaded wall */}
      <path d="M232 850C240 1110 480 1320 786 1320C1090 1320 1330 1110 1330 850L1323 560H247Z" fill="#45423f" stroke="#0c0c0b" strokeWidth="3" />
      <path d="M238 870C260 1110 480 1300 786 1300C1090 1300 1320 1110 1328 860" stroke="#6b6862" strokeWidth="5" />
      {arcs.map((y, i) => (
        <g key={y}>
          <path d={`M${i % 2 ? 250 : 244} 560V${y - 480}C262 ${y - 210} 490 ${y} 786 ${y}C1080 ${y} 1312 ${y - 210} ${i % 2 ? 1320 : 1327} ${y - 480}V560Z`} fill={i % 2 ? "#302e2c" : "url(#light)"} stroke="#0b0b0a" strokeWidth="3" />
          {(i % 2 ? [6, 13] : [8, 16, 24, 32, 41]).map((k) => <path key={k} d={`M248 ${y - 480 - k}C262 ${y - 210 - k} 490 ${y - k} 786 ${y - k}C1080 ${y - k} 1312 ${y - 210 - k} 1322 ${y - 480 - k}`} stroke="#242220" strokeWidth="2" />)}
        </g>
      ))}
      <ellipse cx="786" cy="570" rx="539" ry="497" fill="#3d3b38" stroke="#0b0b0a" strokeWidth="4" />
      {[12, 22, 32].map((k) => <path key={k} d={`M${786 - 539 + k} 600C${247 + k} 300 480 ${75 + k * 0.5} 786 ${76 + k * 0.4}`} stroke="#5a5752" strokeWidth="2" />)}
      <ellipse cx="807" cy="572" rx="517" ry="485" fill="url(#hatch)" stroke="#0b0b0a" strokeWidth="3.500" />
      <ellipse cx="786" cy="547" rx="421" ry="396" fill="url(#well)" stroke="#0b0b0a" strokeWidth="3.500" />
      <g clipPath="url(#mouth)">
        {Array.from({ length: 22 }, (_, j) => 8 + j * 6.5).map((k) => <ellipse key={k} cx="786" cy={547 + k * 0.72} rx={421 - k * 0.22} ry={396 - k * 0.25} stroke="#121110" strokeWidth="2" opacity=".55" />)}
        <ellipse cx="784" cy="655" rx="389" ry="357" fill="#a79b1f" stroke="#0b0b0a" strokeWidth="3" />
        <g clipPath="url(#pcb)">
          <g transform="scale(2.1777 2.4498) translate(160 100) scale(.33333)"><Board /></g>
        </g>
      </g>
      <ellipse cx="786" cy="547" rx="421" ry="396" stroke="#0b0b0a" strokeWidth="3.500" />
    </g>
  </svg>
);

const ViewCube = () => (
  <svg width="260" height="240" viewBox="0 0 780 720" className="absolute left-[2940px] top-[11px] block font-['Open_Sans',sans-serif] font-bold">
    <defs>
      <filter id="cs" x="-30%" y="-30%" width="160%" height="160%"><feGaussianBlur stdDeviation="24" /></filter>
      <linearGradient id="lf" x1="0" y1="0" x2="0" y2="1"><stop offset="0" stopColor="#f4f4f4" /><stop offset="1" stopColor="#e0e0e0" /></linearGradient>
    </defs>
    <path d="M190 380L380 610L620 460L590 380Z" fill="#999" opacity=".6" filter="url(#cs)" />
    <path d="M184 247L372 455L377 589L217 402Z" fill="url(#lf)" /><path d="M372 455L615 284L588 437L377 589Z" fill="url(#lf)" /><path d="M419 105L615 284L372 455L184 247Z" fill="#f1f1f1" />
    <path d="M335 418L380 382L418 410V440L372 478L335 440Z" fill="#e6e8ea" />
    <path d="M419 105L615 284L372 455L184 247ZM184 247L217 402L377 589L372 455M377 589L588 437L615 284" fill="none" stroke="#888" strokeWidth="3" strokeDasharray="24 7" />
    <path d="M588 440L632 250" stroke="#7c7cff" strokeWidth="7" /><path d="M586 442L344 624" stroke="#5ce65c" strokeWidth="7" />
    <g fill="#9a9ea4" textAnchor="middle">
      <text transform="matrix(-.68 -.7 .8 -.52 414 259)" fontSize="57">TOP</text>
      <text transform="matrix(.66 .76 .1 .98 281 450)" fontSize="50">BACK</text>
      <text transform="matrix(.83 -.57 -.1 .98 496 458)" fontSize="50">LEFT</text>
    </g>
    <g className="font-['Liberation_Sans',sans-serif] font-normal" strokeWidth="2">
      <text x="610" y="254" fontSize="92" fill="#7c7cff" stroke="#7c7cff" textLength="54" lengthAdjust="spacingAndGlyphs">Z</text>
      <text x="285" y="680" fontSize="92" fill="#7cff7c" stroke="#7cff7c" textLength="44" lengthAdjust="spacingAndGlyphs">Y</text>
    </g>
  </svg>
);

/* ---------- data ---------- */
const groups: { label: string; w: string; lp: string; icons: React.FC[] }[] = [
  { label: "CREATE", w: "w-[535px]", lp: "pr-[7px]", icons: [SketchI, Extrude, Revolve, Hole, Pattern, FormI] },
  { label: "AUTOMATE", w: "w-[198px]", lp: "pr-[2px]", icons: [Automate] },
  { label: "MODIFY", w: "w-[538px]", lp: "pr-[5px]", icons: [PressPull, Fillet, Shell, Combine, Split, Move] },
  { label: "ASSEMBLE", w: "w-[280px]", lp: "pr-0", icons: [NewComp, Joint, Bom] },
  { label: "CONFIGURE", w: "w-[208px]", lp: "pr-[2px]", icons: [Config1, Config2] },
  { label: "CONSTRUCT", w: "w-[208px]", lp: "pl-[4px]", icons: [Construct] },
  { label: "INSPECT", w: "w-[168px]", lp: "pl-[2px]", icons: [Inspect] },
  { label: "INSERT", w: "w-[280px]", lp: "pr-[2px]", icons: [InsertI, Bolt, Picture] },
];

const tabs = [
  { t: "SURFACE", w: "w-[196px]" }, { t: "MESH", w: "w-[157px]" }, { t: "SHEET METAL", w: "w-[246px]" },
  { t: "PLASTIC", w: "w-[186px]" }, { t: "UTILITIES", w: "w-[195px]" }, { t: "MANAGE", w: "w-[150px]" },
];

const Row = ({ arrow, indent, w, children }: P & { arrow?: "open" | "closed"; indent: string; w: string }) => (
  <div className="mb-2 flex h-10 items-center">
    <div className={"flex shrink-0 items-center " + indent}>{arrow && <Tri open={arrow === "open"} />}</div>
    <div className={"flex h-10 shrink-0 items-center bg-[#f1f1f1] " + w}>{children}</div>
  </div>
);
const L1 = "w-[116px] pl-[81px]";
const L2 = "w-[152px]";
const Txt = ({ children, ml }: P & { ml: string }) => <span className={"whitespace-nowrap pt-px " + ml}>{children}</span>;

const timeline: React.FC[] = [SketchPencil, Extrude, Extrude, LinkBox, Thread, Extrude, SketchPencil, Extrude, Thread, Move, Offset, Offset, Offset, Offset, Combine, Extrude, Fillet, Fillet, Fillet, Import, Flag, SketchPencil, Extrude];

const NavCaret = ({ ml }: { ml: string }) => <svg width="12" height="8" viewBox="0 0 12 8" className={"block shrink-0 " + ml}><path d="M0 0H12L6 8Z" fill="#333" /></svg>;

export default function App() {
  return (
    <div className="flex h-[2000px] w-[3200px] flex-col overflow-hidden bg-white font-['Liberation_Sans',Arial,sans-serif] text-[22px] leading-none text-[#333]">
      {/* title bar */}
      <div className="flex h-[45px] shrink-0 items-center bg-[#721502] text-white">
        <svg width="30" height="32" viewBox="0 0 30 32" className="ml-[3px] block">
          <path d="M1 4L5 0H28V23H1Z" fill="#ff6b00" /><path d="M1 4L5 0V23H1Z" fill="#ff9a50" /><path d="M2 23H30V32H4L2 30Z" fill="#8f3c06" />
          <text x="11" y="17" fontSize="17" fontWeight="700" fill="#fff">F</text><text x="10" y="30.500" fontSize="6.500" fontWeight="700" fill="#fff">FUS</text>
        </svg>
        <span className="ml-[6px] whitespace-nowrap pt-0.5 font-['Open_Sans',sans-serif] text-[22.5px] tracking-[0.16px]">Case V2 v3* (Morgan's Team) - Autodesk Fusion (Education License)</span>
        <svg width="204" height="20" viewBox="0 0 204 20" className="ml-auto mr-[39px] block" fill="none" stroke="#fff" strokeWidth="2">
          <path d="M0 10H20M185 .5L203 19.500M203 .5L185 19.500" /><rect x="92" y="5" width="14" height="14" rx="2" /><path d="M96 1H107Q110 1 110 4V15" />
        </svg>
      </div>

      {/* application bar */}
      <div className="flex h-16 shrink-0 bg-[#cbcbcb]">
        <div className="flex w-[386px] items-start pt-4 text-[#646464]">
          <svg width="28" height="28" viewBox="0 0 28 28" className="ml-[18px] mt-0.5 block" fill="currentColor">
            {[0, 10, 20].map((y) => [0, 10, 20].map((x) => <rect key={`${x}-${y}`} x={x} y={y} width="8" height="8" rx="1" />))}
          </svg>
          <svg width="26" height="32" viewBox="0 0 26 32" className="ml-[39px] block" fill="currentColor"><path d="M2 0H17V10H26V30L24 32H2L0 30V2ZM19 0L26 8H19Z" /></svg>
          <span className="ml-[11px] mt-2.5"><svg width="15" height="10" viewBox="0 0 15 10" className="block"><path d="M0 0H15L7.500 10Z" fill="currentColor" /></svg></span>
          <svg width="28" height="28" viewBox="0 0 28 28" className="ml-[37px] mt-0.5 block"><path d="M1 0H27L28 1V27L27 28H4L0 24V1Z" fill="currentColor" /><path d="M6 1V12H22V1M8 27V18H20V27" stroke="#cbcbcb" strokeWidth="2" fill="none" /><path d="M13 2h4v7h-4zM12 21h4v6h-4z" fill="#cbcbcb" /></svg>
          <svg width="26" height="25" viewBox="0 0 26 25" className="ml-[39px] mt-1 block" fill="none" stroke="currentColor" strokeWidth="3"><path d="M10 1L2 9.500L10 18M2 9.500H12C21 9.500 25 15 25 24" /></svg>
          <span className="ml-[13px] mt-2.5"><svg width="15" height="10" viewBox="0 0 15 10" className="block"><path d="M0 0H15L7.500 10Z" fill="currentColor" /></svg></span>
          <svg width="26" height="25" viewBox="0 0 26 25" className="ml-[23px] mt-1 block text-[#8f8f8f]" fill="none" stroke="currentColor" strokeWidth="3"><path d="M16 1L24 9.500L16 18M24 9.500H14C5 9.500 1 15 1 24" /></svg>
          <span className="ml-[14px] mt-2.5 text-[#8f8f8f]"><svg width="15" height="10" viewBox="0 0 15 10" className="block"><path d="M0 0H15L7.500 10Z" fill="currentColor" /></svg></span>
        </div>
        <div className="mt-2 flex w-[78px] items-start justify-center rounded-t-lg bg-[#b9b9b9] pl-1.5 pt-[17px]">
          <svg width="30" height="28" viewBox="0 0 30 28" fill="#808080" className="block"><path d="M15 0L20 5V3H24V9L30 15V17H26V28H18V18H12V28H4V17H0V15Z" /><path d="M14 20h2v8h-2z" /></svg>
        </div>
        <div className="ml-2 mt-2 flex w-[2294px] items-start rounded-t-lg bg-[#f2f2f2] text-2xl leading-none">
          <svg width="28" height="32" viewBox="0 0 28 32" className="ml-[1050px] mt-[14px] block"><path d="M14 .5L27.500 8L14 16L.5 8Z" fill="#ffc79c" /><path d="M.5 8L14 16V31.500L.5 24Z" fill="#ff9248" /><path d="M27.500 8L14 16V31.500L27.500 24Z" fill="#ff6b00" /><path d="M14 .5L27.500 8V24L14 31.500L.5 24V8Z" fill="none" stroke="#d96a20" strokeWidth=".7" /></svg>
          <span className="ml-[11px] mt-[18px] whitespace-nowrap">Case V2 v3*</span>
          <svg width="18" height="18" viewBox="0 0 18 18" className="ml-auto mr-[13px] mt-5 block" stroke="#777" strokeWidth="2.400"><path d="M1 1L17 17M17 1L1 17" /></svg>
        </div>
        <div className="ml-2 mt-2 flex w-[56px] justify-center rounded-t-lg bg-[#b9b9b9] pt-[15px] pl-1"><svg width="25" height="25" viewBox="0 0 25 25" stroke="#808080" strokeWidth="5" className="block"><path d="M12.500 0V25M0 12.500H25" /></svg></div>
        <div className="flex items-start pt-4 text-[#646464]">
          <svg width="32" height="32" viewBox="0 0 32 32" className="ml-6 block"><circle cx="16" cy="16" r="16" fill="currentColor" /><circle cx="16" cy="16" r="12" fill="#cbcbcb" /><path d="M19 5L21 7L17 12L20 15L25 10L27 12L22 17C24 24 17 26 12 22L6 28L3 25L9 19C6 13 10 9 15 10Z" fill="currentColor" /></svg>
          <svg width="32" height="32" viewBox="0 0 32 32" className="ml-[34px] block"><circle cx="16" cy="16" r="14.800" fill="none" stroke="currentColor" strokeWidth="2.200" /><circle cx="16" cy="16" r="11.500" fill="currentColor" /><path d="M15 8V17.500H23" stroke="#e8e8e8" strokeWidth="2.200" fill="none" /></svg>
          <svg width="28" height="32" viewBox="0 0 28 32" className="ml-[37px] block"><path d="M12 0H15V3C22 5 22 10 22.500 16C23 20 25 22 27 24V26H0V24C3 22 5 20 5 15C5 9 6 5 12 3ZM9 28H18L13.500 32Z" fill="currentColor" /><circle cx="21" cy="7.500" r="7" fill="#0696d7" stroke="#cbcbcb" /></svg>
          <svg width="32" height="32" viewBox="0 0 32 32" className="ml-[35px] block"><circle cx="16" cy="16" r="16" fill="currentColor" /><path d="M10.500 12C10.500 4.500 21.500 4.500 21.500 11.500C21.500 16 16 15.500 16 21" fill="none" stroke="#e8e8e8" strokeWidth="4" /><path d="M14 24h4v4h-4z" fill="#e8e8e8" /></svg>
          <svg width="48" height="48" viewBox="0 0 48 48" className="-mt-2 ml-[42px] block"><defs><clipPath id="av"><circle cx="24" cy="24" r="24" /></clipPath></defs><g clipPath="url(#av)"><rect width="48" height="48" fill="#9fb3d1" /><path d="M24 2C34 2 37 9 36 20C35 27 31 31 30 34C32 40 40 40 46 42V48H2V42C8 40 16 40 18 34C16 31 13 27 12 20C11 9 14 2 24 2Z" fill="#566072" /><path d="M2 48V42C8 40 14 41 17 38L31 38C34 41 40 40 46 42V48Z" fill="#4b5e80" /></g></svg>
        </div>
      </div>

      {/* ribbon */}
      <div className="flex h-[170px] shrink-0 flex-col bg-[#f1f1f1]">
        <div className="flex h-[165px] border-b-2 border-[#cbcbcb] bg-[#f2f2f2]">
          <div className="ml-[23px] mt-[21px] flex h-[122px] w-[220px] shrink-0 items-center justify-center gap-[11px] rounded-lg border-2 border-[#cbcbcb] pb-0.5 pl-0.5 font-bold">
            <span>DESIGN</span><span className="pt-0.5"><Caret /></span>
          </div>
          <div className="ml-[11px] flex flex-col">
            <div className="ml-[23px] flex h-[47px] items-start">
              <div className="flex h-[47px] w-[114px] justify-center border-b-6 border-[#0696d7] pt-3 text-[#0696d7]">SOLID</div>
              <div className="flex pl-[65px] pt-3">
                {tabs.map((t) => <div key={t.t} className={"whitespace-nowrap " + t.w}>{t.t}</div>)}
              </div>
            </div>
            <div className="ml-px flex pt-[6px]">
              {groups.map((g) => (
                <div key={g.label} className={"flex h-[102px] shrink-0 flex-col items-center border-r-2 border-[#cbcbcb] " + g.w}>
                  <div className="flex gap-[22px] pt-px">{g.icons.map((I, i) => <Ic key={i}><I /></Ic>)}</div>
                  <div className={"mt-[15px] flex items-start gap-[6px] " + g.lp}><span>{g.label}</span><span className="pt-1"><Caret /></span></div>
                </div>
              ))}
              <div className="flex w-[156px] flex-col items-center">
                <div className="-mt-[5px] flex size-[76px] items-center justify-center bg-[#0696d7]">
                  <Ic><path d="M3 .8H30V22H3Z" stroke="#5fd3a0" strokeWidth="1.400" strokeDasharray="3.500 2" /><path d="M22.500 13.500L32 24.500L28.500 25.500L31 31L28 32L26 27L22.500 29.500Z" fill="#fff" /></Ic>
                </div>
                <div className="mt-[9px] flex items-start gap-[7px] pl-1"><span>SELECT</span><span className="pt-1"><Caret /></span></div>
              </div>
            </div>
          </div>
        </div>
      </div>

      {/* canvas with floating panels */}
      <div className="relative h-[1622px] shrink-0 overflow-hidden">
        <Scene />
        <ViewCube />

        <div className="absolute left-0 top-[9px]">
          <div className="ml-2 flex h-[50px] w-[599px] items-center border-2 border-b-3 border-[#cbcbcb] bg-[#f1f1f1] text-[#646464]">
            <svg width="22" height="13" viewBox="0 0 22 13" className="ml-2 mt-1 block"><path d="M10 0V13L0 6.500ZM21 0V13L11 6.500Z" fill="#333" /></svg>
            <span className="ml-[18px]">BROWSER</span>
            <svg width="19" height="19" viewBox="0 0 19 19" className="ml-auto mr-[20px] block"><circle cx="9.500" cy="9.500" r="9.500" fill="#2f2f2f" /><path d="M4.500 9.500h10" stroke="#ccc" strokeWidth="2" /></svg>
          </div>
          <div className="pt-[10px]">
            <Row arrow="open" indent="w-[80px] pl-[45px]" w="w-[356px]">
              <div className="ml-1 h-8 w-[6px] bg-[#ffacac]" /><div className="ml-[6px]"><Eye /></div>
              <div className="ml-3 flex h-8 w-[204px] items-center bg-[#969696] font-bold text-white"><div className="ml-2"><Comp /></div><Txt ml="ml-[28px]">Case V2 v3</Txt></div>
              <svg width="30" height="30" viewBox="0 0 30 30" className="ml-[6px] block"><circle cx="14" cy="14" r="14" fill="#e38b1b" /><text x="6" y="20" fontSize="18" fontWeight="700" fill="#fff">M</text><circle cx="23" cy="23.500" r="4.500" fill="#fff" stroke="#444" strokeWidth="1.400" /></svg>
              <svg width="27" height="27" viewBox="0 0 27 27" className="ml-[14px] block"><defs><linearGradient id="rd" x1="0" y1="0" x2="0" y2="1"><stop offset="0" stopColor="#b4b9c6" /><stop offset="1" stopColor="#fff" /></linearGradient></defs><circle cx="13.500" cy="13.500" r="12.500" fill="url(#rd)" stroke="#555a66" strokeWidth="1.500" /><circle cx="13.500" cy="13.500" r="5" fill="#3c414c" /></svg>
            </Row>
            <Row arrow="closed" indent={L1} w="w-[268px]"><div className="ml-[6px]"><GearI s={27} c="#808080" hole="#f1f1f1" /></div><Txt ml="ml-[25px]">Document Settings</Txt></Row>
            <Row arrow="closed" indent={L1} w="w-[220px]"><div className="ml-[6px]"><Folder /></div><Txt ml="ml-7">Named Views</Txt></Row>
            <Row arrow="closed" indent={L1} w="w-[198px]"><div className="ml-[6px]"><EyeOff /></div><div className="ml-[18px]"><Folder /></div><Txt ml="ml-7">Origin</Txt></Row>
            <Row arrow="closed" indent={L1} w="w-[222px]"><div className="ml-[6px]"><EyeOff /></div><div className="ml-[18px]"><Folder /></div><Txt ml="ml-7">Analysis</Txt></Row>
            <Row arrow="open" indent={L1} w="w-[206px]"><div className="ml-[6px]"><Eye /></div><div className="ml-[18px]"><Folder /></div><Txt ml="ml-7">Bodies</Txt></Row>
            <Row indent={L2} w="w-[198px]"><div className="ml-[6px]"><Eye /></div><div className="ml-[18px]"><Cyl /></div><Txt ml="ml-7">Body1</Txt></Row>
            <Row indent={L2} w="w-[198px]"><div className="ml-[6px]"><EyeOff /></div><div className="ml-[18px]"><Cyl /></div><Txt ml="ml-7">Body2</Txt></Row>
            <Row arrow="open" indent={L1} w="w-[230px]"><div className="ml-[6px]"><EyeOff /></div><div className="ml-[18px]"><Folder /></div><Txt ml="ml-7">Sketches</Txt></Row>
            <Row indent={L2} w="w-[214px]"><div className="ml-[6px]"><Eye faded /></div><div className="ml-[18px]"><Ic s={32}><SketchPencil /></Ic></div><Txt ml="ml-7">Sketch1</Txt></Row>
            <Row indent={L2} w="w-[214px]"><div className="ml-[6px]"><Eye faded /></div><div className="ml-[18px]"><Ic s={32}><SketchLock /></Ic></div><Txt ml="ml-7">Sketch2</Txt></Row>
            <Row indent={L2} w="w-[222px]"><div className="ml-[6px]"><EyeOff /></div><div className="ml-[18px]"><Ic s={32}><SketchLock /></Ic></div><Txt ml="ml-7">Sketch3</Txt></Row>
            <Row arrow="closed" indent={L1} w="w-[490px]">
              <div className="h-10 w-[10px] bg-[#e391e6]" /><div className="ml-[6px]"><Eye /></div><div className="ml-[18px]"><CompAnchor /></div><div className="ml-[19px]"><Ic s={30}><Chain c="#333" w={3} /></Ic></div><Txt ml="ml-[29px]">button_transmitter_cr2032_t...</Txt>
            </Row>
            <Row arrow="closed" indent={L1} w="w-[488px]">
              <div className="h-10 w-[10px] bg-[#ec4aa4]" /><div className="ml-[6px]"><Eye /></div><div className="ml-[21px]"><BoxSmall /></div><Txt ml="ml-[31px]">91732A649_Stainless Steel Helic...</Txt>
            </Row>
          </div>
        </div>

        <div className="absolute left-2 top-[1565px] flex h-[50px] w-[599px] items-center border-x-2 border-b-3 border-[#cbcbcb] bg-[#f1f1f1] pt-0.5 text-[#646464]">
          <span className="ml-[48px]">COMMENTS</span>
          <svg width="19" height="19" viewBox="0 0 19 19" className="ml-auto mr-[20px] mt-0.5 block"><circle cx="9.500" cy="9.500" r="9.500" fill="#2f2f2f" /><path d="M4.500 9.500h10M9.500 4.500v10" stroke="#ddd" strokeWidth="2" /></svg>
        </div>

        <div className="absolute left-[1364px] top-[1562px] flex h-12 w-[474px] items-center bg-[#f1f1f1]">
          <svg width="30" height="31" viewBox="0 0 30 31" fill="none" className="ml-2 block"><path d="M12 11.500C-4 13 -4 20 12 21M18 11.500C34 13 34 21 18 21" stroke="#3c4552" strokeWidth="1.600" /><path d="M11.500 30V8H9L15 1L21 8H18.500V30Z" fill="#e8eaee" stroke="#3c4552" strokeWidth="1.600" /><path d="M4 20.500l5-3.500v7zM9 19.500h9v2H9z" fill="#2c3440" /></svg>
          <NavCaret ml="ml-[10px]" />
          <svg width="28" height="28" viewBox="0 0 28 28" className="ml-[14px] mt-0.5 block"><path d="M2 8L8 1L9 6L20 2V8Z" fill="#9aa0aa" stroke="#3c4552" strokeWidth="1.400" /><rect x="1" y="9" width="26" height="18" fill="#fff" stroke="#3c4552" strokeWidth="1.800" /><rect x="4.500" y="12.500" width="19" height="10.500" fill="#9a9eaa" stroke="#3c4552" strokeWidth="1.500" /></svg>
          <svg width="31" height="31" viewBox="0 0 31 31" className="ml-[23px] block"><path d="M9 27C7 22 3 19 1 16C1 13 5 14 8 17L7 5C7 3 10 3 10.500 5L12 13L13.500 2.500C14 .5 17 .5 17 2.500V13L20 4C21 2 23.500 3 23 5L21.500 14L26 8C28 6.500 30 8 29 10C25 16 25 20 21 27C19 31 11 31 9 27Z" fill="#fafafa" stroke="#4a515c" strokeWidth="1.500" /></svg>
          <svg width="31" height="31" viewBox="0 0 31 31" fill="none" className="ml-[21px] block"><path d="M18.500 18.500L29 28" stroke="#252c38" strokeWidth="4.500" /><circle cx="11.500" cy="11.500" r="10.500" fill="#e6f1f2" stroke="#4d5664" strokeWidth="1.600" /><path d="M23.500 5h7M27 1.500v7M23.500 10.500h7" stroke="#3c4552" strokeWidth="1.500" /></svg>
          <svg width="31" height="31" viewBox="0 0 31 31" fill="none" className="ml-[21px] mt-px block"><path d="M18.500 18.500L28 28" stroke="#333" strokeWidth="4.500" /><circle cx="11.500" cy="11.500" r="10.500" fill="#e6f1f0" stroke="#4d5664" strokeWidth="1.600" /><rect x="6.500" y="6.500" width="10.500" height="10.500" fill="#fff" stroke="#555" strokeWidth="1.400" /></svg>
          <NavCaret ml="ml-[10px]" />
          <svg width="30" height="31" viewBox="0 0 30 31" fill="none" className="ml-[13px] block"><path d="M12 23H18V27L23 29.500H7L12 27Z" fill="#c7cbd6" stroke="#555c6a" strokeWidth="1.200" /><rect x="1" y="1" width="28" height="22" rx="1" fill="#f4f5f8" stroke="#2f3848" strokeWidth="1.600" /><rect x="4" y="4" width="22" height="16.500" fill="#98b8e0" stroke="#2d4a7e" strokeWidth="1.600" /></svg>
          <NavCaret ml="ml-[5px]" />
          <svg width="29" height="30" viewBox="0 0 29 30" fill="none" className="ml-[15px] block"><defs><linearGradient id="gd" x1="0" y1="0" x2="0" y2="1"><stop offset="0" stopColor="#fff" /><stop offset="1" stopColor="#a5a8b8" /></linearGradient></defs><rect x="1" y="1" width="27" height="28" fill="url(#gd)" /><path d="M5 1v28M9 1v28M13 1v28M17 1v28M21 1v28M25 1v28M1 5h27M1 9h27M1 13h27M1 17h27M1 21h27M1 25h27" stroke="#777b88" strokeWidth="1" /><rect x="1" y="1" width="27" height="28" stroke="#333" strokeWidth="1.600" /></svg>
          <NavCaret ml="ml-[6px]" />
          <svg width="30" height="26" viewBox="0 0 30 26" fill="none" className="ml-[14px] block"><path d="M1 1H29V25H1Z" fill="#98b8e0" stroke="#233f74" strokeWidth="1.500" /><path d="M15 1V25M1 13H29" stroke="#233f74" strokeWidth="1.800" /><path d="M4 3.500h8v7H4zM18 3.500h8v7h-8zM4 15.500h8v7H4zM18 15.500h8v7h-8z" stroke="#4a6fae" strokeWidth="1.200" /></svg>
          <NavCaret ml="ml-[6px]" />
        </div>

        <svg width="34" height="34" viewBox="0 0 34 34" className="absolute left-[3142px] top-[1573px] block"><path d="M17 0A17 17 0 0134 17V34H17A17 17 0 0117 0Z" fill="#000" /><path d="M7 17L19 10M7 21.500L25 10.500M13 22L25 15M18 22.500L25 18.500" stroke="#fff" strokeWidth="2" /></svg>
      </div>

      {/* timeline */}
      <div className="flex h-[99px] shrink-0 border-t-2 border-[#dedede] bg-[#f1f1f1]">
        <div className="-mt-0.5 flex w-[268px] items-start border-t-2 border-[#cbcbcb] pt-8 text-[#646464]">
          <svg width="22" height="24" viewBox="0 0 22 24" fill="currentColor" className="ml-[22px] mt-1 block"><path d="M0 0H4V24H0ZM22 1V23L4.500 12Z" /></svg>
          <svg width="25" height="24" viewBox="0 0 25 24" fill="currentColor" className="ml-[26px] mt-1 block"><path d="M19 0V24L0 12ZM21 7H25V18H21Z" /></svg>
          <svg width="24" height="30" viewBox="0 0 24 30" fill="currentColor" className="ml-[27px] mt-px block"><path d="M0 0L24 15L0 30Z" /></svg>
          <svg width="26" height="24" viewBox="0 0 26 24" fill="currentColor" className="ml-[24px] mt-1 block"><path d="M6 0L26 12L6 24ZM0 7H4V18H0Z" /></svg>
          <svg width="22" height="24" viewBox="0 0 22 24" fill="currentColor" className="ml-[26px] mt-1 block"><path d="M0 1L18 12L0 23ZM18 0H22V24H18Z" /></svg>
        </div>
        <div className="relative ml-5 w-[1120px] pt-3.5">
          <div className="flex h-3">
            <div className="w-[904px] bg-[#ffacb0]" /><div className="ml-2 w-5 bg-[#ffacb0]" /><div className="w-5 bg-[#ea4fa8]" /><div className="ml-2 w-[137px] bg-[#ffacb0]" />
          </div>
          <div className="flex gap-4 pl-[5px] pt-1">
            {timeline.map((I, i) => (
              <div key={i} className="flex w-8 flex-col items-center">
                <Ic s={32}><I /></Ic>
                <div className="mt-[6px] h-[10px] w-1 bg-[#cbcbcb]" />
              </div>
            ))}
          </div>
          <div className="ml-[19px] h-1 w-[1060px] bg-[#cbcbcb]" />
          <svg width="20" height="20" viewBox="0 0 20 20" className="absolute left-[919px] top-[69px] block"><path d="M0 0H20V20H0Z" fill="#808080" /><path d="M10 3V17M3 10H17" stroke="#fff" strokeWidth="2.600" /></svg>
          <svg width="24" height="64" viewBox="0 0 24 64" className="absolute left-[1088px] top-[18px] block"><path d="M0 0H24V8L14 18V64H10V18L0 8Z" fill="#646464" /></svg>
        </div>
        <div className="-mt-0.5 ml-auto flex w-[90px] items-start border-t-2 border-[#cbcbcb] pl-8 pt-8"><GearI s={30} c="#808080" hole="#fff" /></div>
      </div>
    </div>
  );
}
